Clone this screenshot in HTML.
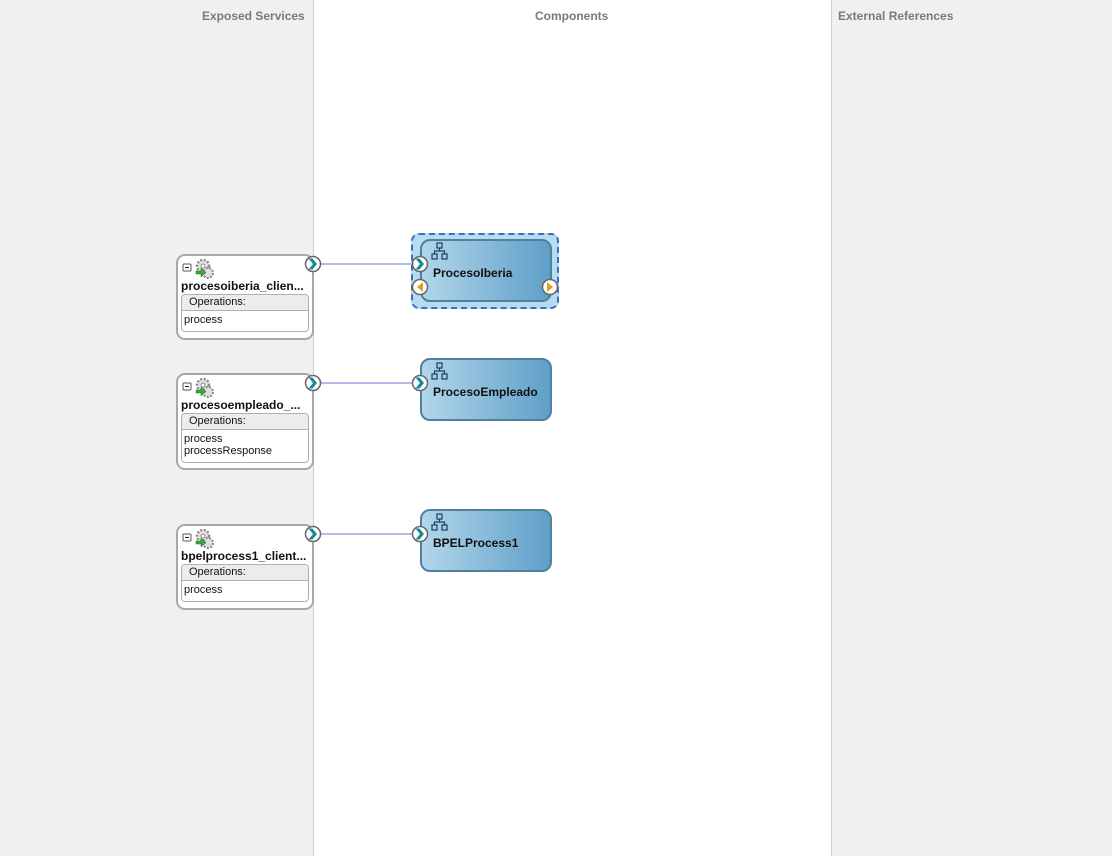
<!DOCTYPE html>
<html><head><style>
body{margin:0;width:1112px;height:856px;position:relative;overflow:hidden;font-family:"Liberation Sans",sans-serif;background:#fff}
.a{position:absolute}
.hdr{position:absolute;top:9px;font-size:12px;font-weight:bold;color:#7a7a7a}
.svc{position:absolute;left:176px;width:134px;border:2px solid #a8a8a8;border-radius:9px;background:#fff}
.nm{position:absolute;left:3px;top:23px;font-size:12px;font-weight:bold;color:#111;white-space:nowrap}
.ops{position:absolute;left:3px;width:126px;border:1px solid #b0b0b0;border-radius:4px;background:#fff;font-size:11px;color:#111}
.ops .h{background:#ececec;border-bottom:1px solid #b0b0b0;height:15px;line-height:15px;padding-left:7px;border-radius:4px 4px 0 0}
.ops .i{padding-left:2px;line-height:12px}
.cmp{position:absolute;left:420px;width:128px;height:59px;border:2px solid #50809e;border-radius:10px;background:linear-gradient(90deg,#b2d6ea,#5f9fc8)}
.cmp span{position:absolute;left:11px;top:25px;font-size:12px;font-weight:bold;color:#111}
</style></head><body>
<div class="a" style="left:0;top:0;width:313px;height:856px;background:#f0f0f0;border-right:1px solid #d0d0d0"></div>
<div class="a" style="left:831px;top:0;width:281px;height:856px;background:#f0f0f0;border-left:1px solid #d0d0d0"></div>
<div class="hdr" style="left:202px">Exposed Services</div>
<div class="hdr" style="left:535px">Components</div>
<div class="hdr" style="left:838px">External References</div>

<svg class="a" style="left:0;top:0" width="1112" height="856">
<g stroke="#b8b8ea" stroke-width="2"><line x1="320" y1="264" x2="413" y2="264"/><line x1="320" y1="383" x2="413" y2="383"/><line x1="320" y1="534" x2="413" y2="534"/></g>
</svg>

<div class="a" style="left:411px;top:233px;width:144px;height:72px;border:2px dashed #3a6fc4;border-radius:8px;background:#b6dcf0"></div>

<div class="svc" style="top:254px;height:82px"><div class="nm">procesoiberia_clien...</div>
<div class="ops" style="top:38px;height:36px"><div class="h">Operations:</div><div class="i" style="padding-top:3px">process</div></div></div>
<div class="svc" style="top:373px;height:93px"><div class="nm">procesoempleado_...</div>
<div class="ops" style="top:38px;height:48px"><div class="h">Operations:</div><div class="i" style="padding-top:3px">process<br>processResponse</div></div></div>
<div class="svc" style="top:524px;height:82px"><div class="nm">bpelprocess1_client...</div>
<div class="ops" style="top:38px;height:36px"><div class="h">Operations:</div><div class="i" style="padding-top:3px">process</div></div></div>

<div class="cmp" style="top:239px"><span>ProcesoIberia</span></div>
<div class="cmp" style="top:358px"><span>ProcesoEmpleado</span></div>
<div class="cmp" style="top:509px"><span>BPELProcess1</span></div>

<svg class="a" style="left:0;top:0" width="1112" height="856">
<defs>
<g id="gear"><rect x="0" y="-4" width="8" height="7" rx="1" fill="#fff" stroke="#555"/><line x1="2" y1="-0.5" x2="6" y2="-0.5" stroke="#222"/>
<circle cx="20" cy="-2" r="6" fill="#e4e4e4" stroke="#8a8a8a" stroke-width="2.5" stroke-dasharray="2 1.6"/><circle cx="20" cy="-2" r="2" fill="#fff" stroke="#888"/>
<circle cx="25" cy="5" r="5" fill="#e0e0e0" stroke="#8a8a8a" stroke-width="2" stroke-dasharray="2 1.5"/>
<path d="M13 3h5v-3l5 4.5-5 4.5v-3h-5z" fill="#3aa83a" stroke="#1c6e1c" stroke-width="0.5"/></g>
<g id="in"><circle r="7.5" fill="#fff" stroke="#666" stroke-width="1.5"/><path d="M-4.5 -5.5h4l4.5 5.5-4.5 5.5h-4l4.5-5.5z" fill="#138a9a"/></g>
<g id="tree" fill="none" stroke="#1a3d66" stroke-width="1.2"><rect x="5" y="0" width="5" height="5"/><rect x="0" y="11" width="5" height="5"/><rect x="10" y="11" width="5" height="5"/><path d="M7.5 5v3M2.5 11V8h10v3"/></g>
</defs>
<use href="#gear" x="183" y="268"/><use href="#gear" x="183" y="387"/><use href="#gear" x="183" y="538"/>
<use href="#in" x="313" y="264"/><use href="#in" x="313" y="383"/><use href="#in" x="313" y="534"/>
<use href="#in" x="420" y="264"/><use href="#in" x="420" y="383"/><use href="#in" x="420" y="534"/>
<use href="#tree" x="432" y="243"/><use href="#tree" x="432" y="363"/><use href="#tree" x="432" y="514"/>
<circle cx="420" cy="287" r="7.5" fill="#fff" stroke="#666" stroke-width="1.5"/><path d="M423 282l-6 5 6 5z" fill="#e0a020"/>
<circle cx="550" cy="287" r="7.5" fill="#fff" stroke="#666" stroke-width="1.5"/><path d="M547 282l6 5-6 5z" fill="#e0a020"/>
</svg>
</body></html>
